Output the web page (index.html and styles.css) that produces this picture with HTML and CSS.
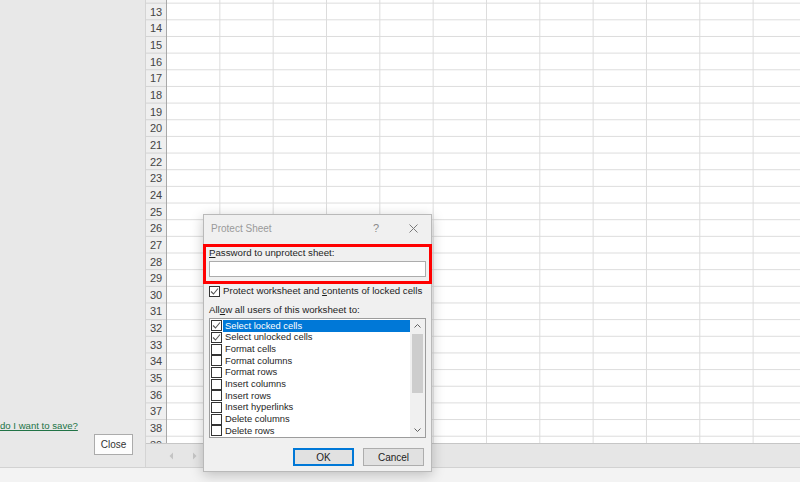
FILE: index.html
```html
<!DOCTYPE html>
<html lang="en">
<head>
    <meta charset="UTF-8">
    <meta name="viewport" content="width=device-width, initial-scale=1.0">
    <title>Protect Sheet</title>
    <link rel="stylesheet" href="styles.css">
</head>
<body>
    <div class="app">
        <aside class="panel">
            <a class="why" href="#">do I want to save?</a>
            <button class="close-btn" type="button">Close</button>
        </aside>

        <main class="book">
            <div class="sheet">
                <div class="heads">
                    <div></div><div>13</div><div>14</div><div>15</div><div>16</div>
                    <div>17</div><div>18</div><div>19</div><div>20</div><div>21</div>
                    <div>22</div><div>23</div><div>24</div><div>25</div><div>26</div>
                    <div>27</div><div>28</div><div>29</div><div>30</div><div>31</div>
                    <div>32</div><div>33</div><div>34</div><div>35</div><div>36</div>
                    <div>37</div><div>38</div><div>39</div>
                </div>
                <div class="cells"></div>
            </div>
            <div class="tabbar">
                <svg class="arr" width="5" height="8" viewBox="0 0 5 8"><path d="M4 0.5 L0.5 4 L4 7.5 Z" fill="#c4c4c4"/></svg>
                <svg class="arr" width="5" height="8" viewBox="0 0 5 8"><path d="M1 0.5 L4.5 4 L1 7.5 Z" fill="#c4c4c4"/></svg>
            </div>
        </main>
    </div>
    <div class="status"></div>

    <div class="dialog">
        <div class="dlg-title">
            <span>Protect Sheet</span>
            <span class="tb-help">?</span>
            <span class="tb-close">
                <svg width="9" height="9" viewBox="0 0 9 9"><path d="M0.5 0.5 L8.5 8.5 M8.5 0.5 L0.5 8.5" stroke="#7a7a7a" stroke-width="1" fill="none"/></svg>
            </span>
        </div>
        <div class="dlg-body">
            <div class="line"><u>P</u>assword to unprotect sheet:</div>
            <div class="pw-input"></div>
            <div class="line check-row">
                <span class="box on"><svg width="9" height="9" viewBox="0 0 9 9"><path d="M1 4.5 L3.5 7 L8 1.5" stroke="#555" stroke-width="1.1" fill="none"/></svg></span>
                <span>Protect worksheet and <u>c</u>ontents of locked cells</span>
            </div>
            <div class="line allow">All<u>o</u>w all users of this worksheet to:</div>
            <div class="list">
                <div class="items">
                    <div class="item sel"><span class="box on"><svg width="9" height="9" viewBox="0 0 9 9"><path d="M1 4.5 L3.5 7 L8 1.5" stroke="#555" stroke-width="1.1" fill="none"/></svg></span><span class="txt">Select locked cells</span></div>
                    <div class="item"><span class="box on"><svg width="9" height="9" viewBox="0 0 9 9"><path d="M1 4.5 L3.5 7 L8 1.5" stroke="#555" stroke-width="1.1" fill="none"/></svg></span><span class="txt">Select unlocked cells</span></div>
                    <div class="item"><span class="box"></span><span class="txt">Format cells</span></div>
                    <div class="item"><span class="box"></span><span class="txt">Format columns</span></div>
                    <div class="item"><span class="box"></span><span class="txt">Format rows</span></div>
                    <div class="item"><span class="box"></span><span class="txt">Insert columns</span></div>
                    <div class="item"><span class="box"></span><span class="txt">Insert rows</span></div>
                    <div class="item"><span class="box"></span><span class="txt">Insert hyperlinks</span></div>
                    <div class="item"><span class="box"></span><span class="txt">Delete columns</span></div>
                    <div class="item"><span class="box"></span><span class="txt">Delete rows</span></div>
                </div>
                <div class="scroll">
                    <svg class="sc-btn" width="15" height="14" viewBox="0 0 15 14"><path d="M4.5 8.5 L7.5 5.5 L10.5 8.5" stroke="#606060" stroke-width="1" fill="none"/></svg>
                    <div class="thumb"></div>
                    <svg class="sc-btn down" width="15" height="14" viewBox="0 0 15 14"><path d="M4.5 5.5 L7.5 8.5 L10.5 5.5" stroke="#606060" stroke-width="1" fill="none"/></svg>
                </div>
            </div>
            <div class="buttons">
                <button class="btn default" type="button">OK</button>
                <button class="btn" type="button">Cancel</button>
            </div>
        </div>
        <div class="mark"></div>
    </div>
</body>
</html>
```

FILE: styles.css
```css
body {
    margin: 0;
    width: 800px;
    height: 482px;
    overflow: hidden;
    font-family: "Liberation Sans", Arial, sans-serif;
    background-color: #f3f3f3;
}
.app {
    display: flex;
    height: 467px;
}

/* left pane */
.panel {
    width: 145px;
    background-color: #e8e8e8;
    display: flex;
    flex-direction: column;
    justify-content: flex-end;
    padding-bottom: 12px;
    box-sizing: border-box;
}
.why {
    font-size: 9.6px;
    line-height: 14px;
    margin-bottom: 1px;
    color: #217346;
    white-space: nowrap;
}
.close-btn {
    align-self: flex-end;
    margin-right: 12px;
    width: 39px;
    height: 21px;
    padding: 0;
    background-color: #fdfdfd;
    border: 1px solid #ababab;
    font-family: inherit;
    font-size: 10px;
    color: #333;
}

/* worksheet */
.book {
    flex: 1;
    display: flex;
    flex-direction: column;
    border-left: 1px solid #d4d4d4;
}
.sheet {
    height: 443px;
    overflow: hidden;
    display: flex;
}
.heads {
    width: 20px;
    margin-top: -14px;
    background-color: #efefef;
    background-image: linear-gradient(to bottom, #d2d2d2 1px, transparent 1px);
    background-size: 100% 16.667px;
    border-right: 1px solid #a9a9a9;
    font-size: 11px;
    color: #444;
    text-align: center;
}
.heads div {
    height: 16.667px;
    line-height: 19px;
}
.cells {
    flex: 1;
    background-color: #fff;
    background-image:
        linear-gradient(to left, #dcdcdc 1px, transparent 1px),
        linear-gradient(to bottom, #dcdcdc 1px, transparent 1px);
    background-size: 53.333px 100%, 100% 16.667px;
    background-position: 0 0, 0 -14px;
}
.tabbar {
    height: 24px;
    box-sizing: border-box;
    background-color: #e6e6e6;
    border-top: 1px solid #c6c6c6;
    display: flex;
    align-items: center;
    gap: 18px;
    padding-left: 23px;
}
.status {
    height: 15px;
    border-top: 1px solid #d2d2d2;
    box-sizing: border-box;
}

/* dialog */
.dialog {
    position: absolute;
    left: 203px;
    top: 214px;
    width: 229px;
    height: 258px;
    box-sizing: border-box;
    background-color: #f0f0f0;
    border: 1px solid #b9b9b9;
    box-shadow: 0 3px 12px rgba(0, 0, 0, 0.22);
    font-size: 9.7px;
    color: #1e1e1e;
}
.dlg-title {
    height: 26px;
    display: flex;
    align-items: center;
    padding: 0 6px 0 7px;
    font-size: 10px;
    color: #9a9a9a;
}
.tb-help {
    margin-left: auto;
    width: 12px;
    text-align: center;
    font-size: 11px;
    color: #8a8a8a;
}
.tb-close {
    width: 24px;
    margin-left: 19px;
    display: flex;
    justify-content: center;
}
.dlg-body {
    padding: 0 5px;
    display: flex;
    flex-direction: column;
}
.line {
    line-height: 12px;
    margin-top: 6px;
    white-space: nowrap;
}
.pw-input {
    margin-top: 2px;
    height: 16px;
    box-sizing: border-box;
    background-color: #fff;
    border: 1px solid #acacac;
}
.check-row {
    margin-top: 8px;
    display: flex;
    align-items: center;
    gap: 3px;
}
.box {
    width: 11px;
    height: 11px;
    box-sizing: border-box;
    border: 1px solid #333;
    background-color: #fff;
    display: flex;
    align-items: center;
    justify-content: center;
    flex-shrink: 0;
}
.allow {
    margin-top: 7px;
}
.list {
    margin-top: 2px;
    height: 120px;
    box-sizing: border-box;
    border: 1px solid #9c9c9c;
    background-color: #fff;
    display: flex;
    font-size: 9.4px;
}
.items {
    flex: 1;
    padding: 1px 0 0 1px;
}
.item {
    height: 11.667px;
    display: flex;
    align-items: center;
}
.item .txt {
    flex: 1;
    height: 12px;
    line-height: 12px;
    padding-left: 2px;
    margin-left: 1px;
}
.item.sel .txt {
    background-color: #0078d7;
    color: #fff;
}
.scroll {
    width: 15px;
    background-color: #f0f0f0;
    display: flex;
    flex-direction: column;
}
.thumb {
    margin: 1px 2px 0 2px;
    height: 59px;
    background-color: #cdcdcd;
}
.sc-btn.down {
    margin-top: auto;
}
.buttons {
    margin-top: 10px;
    display: flex;
    justify-content: flex-end;
    gap: 9px;
    padding-right: 2px;
}
.btn {
    width: 61px;
    height: 18px;
    padding: 0;
    background-color: #e1e1e1;
    border: 1px solid #adadad;
    font-family: inherit;
    font-size: 10px;
    color: #1e1e1e;
}
.btn.default {
    border-color: #0078d7;
    box-shadow: inset 0 0 0 1px #0078d7;
}
.mark {
    position: absolute;
    left: -1px;
    top: 29px;
    width: 229px;
    height: 40px;
    box-sizing: border-box;
    border: 3px solid #f00;
}
```
